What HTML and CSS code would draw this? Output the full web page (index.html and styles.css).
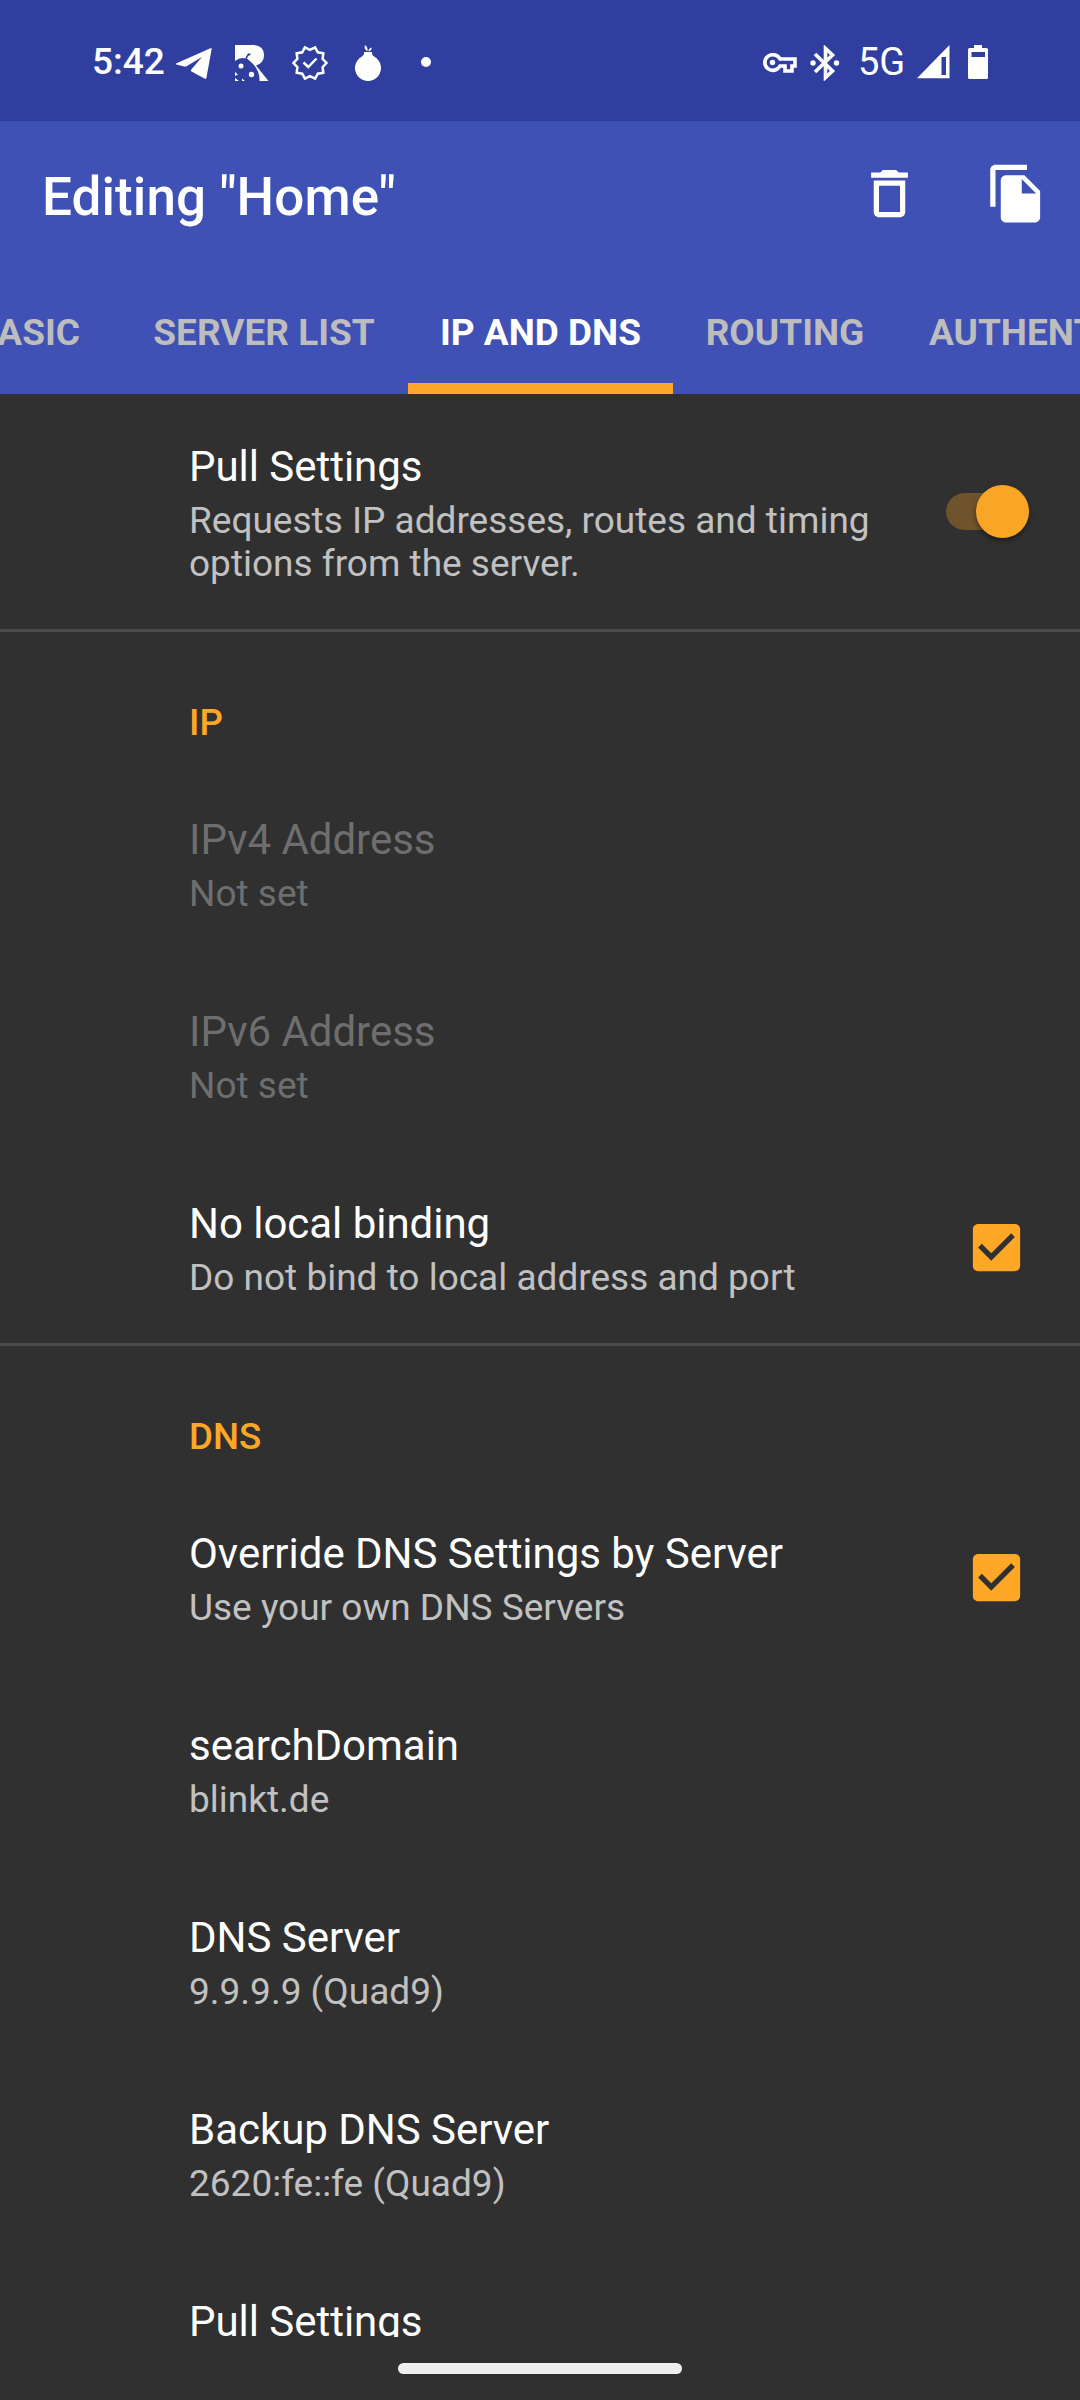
FILE: index.html
```
<!DOCTYPE html>
<html lang="en">
<head>
<meta charset="utf-8">
<title>Editing "Home"</title>
<link rel="stylesheet" href="styles.css">
</head>
<body>
<div class="screen">
  <header class="status">
    <div class="status-left">
      <span class="clock">5:42</span>
      <svg class="icon-telegram" viewBox="0 0 38 36"><path d="M1 18.500 35.500 3.200q1.300-.4 1.100 1L31.500 32.500q-.5 1.800-2 1L16.500 26.500q-1.200-.8-.2-2L27 12 11.500 21.200q-1 .6-2.300.2L1.300 19.600q-1.100-.4-.3-1.100z"/></svg>
      <svg class="icon-bug" viewBox="0 0 36 36"><path d="M0 0H19Q29 1 29 10Q29 18 21 20.500L33.500 36H24.500Q25 25 16 17L12 13.500 13 11 15.500 10V8.500H13L11 11.500 10.500 13.500Q5 12 0 16z"/><circle cx="6" cy="21" r="2.500"/><circle cx="16.500" cy="29.500" r="2.700"/><path d="M0 27 3 29.500 0 31zM0 33 4 36H0zM7 33.500 10 36H7z"/></svg>
      <svg class="icon-badge" viewBox="0 0 36 36"><path class="stroke" d="M34.500 18 30.600 22.100 31.300 27.700 25.800 28.700 23.100 33.700 18 31.200 12.900 33.700 10.200 28.700 4.700 27.700 5.400 22.100 1.500 18 5.400 13.900 4.700 8.300 10.200 7.300 12.900 2.300 18 4.800 23.100 2.300 25.800 7.300 31.300 8.300 30.600 13.900z"/><path class="stroke" d="M11.500 17.500 16.300 22 24.500 13.500"/></svg>
      <svg class="icon-onion" viewBox="0 0 28 36"><path d="M10 7H18Q17.500 10 20 11.500A13 13 0 1 1 8 11.500Q10.500 10 10 7z"/><path d="M13.500 6.300Q9.500 4 11 0 14 2 13.500 6.300zM14.500 6.300Q14.500 3.500 17.800 2.500 17.500 6 14.500 6.300z"/></svg>
      <span class="more-dot"></span>
    </div>
    <div class="status-right">
      <svg class="icon-key" viewBox="0 0 34 20"><path class="stroke thick" d="M17 6H32V13H29V18H22V13H17A8 7.800 0 1 1 17 6z"/><circle cx="9.500" cy="9.500" r="2.700"/></svg>
      <svg class="icon-bluetooth" viewBox="0 0 30 36"><path class="stroke thick" d="M5 9 22.500 26 15.500 32.500V3.500L22.500 10 5 27"/><circle cx="3" cy="18" r="2.700"/><circle cx="26.500" cy="18" r="2.700"/></svg>
      <span class="network">5G</span>
      <svg class="icon-signal" viewBox="0 0 33 34"><path fill-rule="evenodd" d="M0 33.300 32.500 0V33.300zM24.500 12V30H29V12z"/></svg>
      <svg class="icon-battery" viewBox="0 0 20 34"><path fill-rule="evenodd" d="M6 0H14V3H18.500Q20 3 20 4.500V32.500Q20 34 18.500 34H1.500Q0 34 0 32.500V4.500Q0 3 1.500 3H6zM3.500 7V12H17V7z"/></svg>
    </div>
  </header>

  <div class="appbar">
    <div class="toolbar">
      <h1 class="title">Editing "Home"</h1>
      <svg class="action" viewBox="0 0 24 24"><path d="M6 19c0 1.100.9 2 2 2h8c1.100 0 2-.9 2-2V7H6v12zM8 9h8v10H8V9zM15.500 4l-1-1h-5l-1 1H5v2h14V4z"/></svg>
      <svg class="action" viewBox="0 0 24 24"><path d="M16 1H4c-1.100 0-2 .9-2 2v14h2V3h12V1zm-1 4l6 6v10c0 1.100-.9 2-2 2H7.990C6.890 23 6 22.100 6 21l.01-14c0-1.100.89-2 1.990-2h7zm-1 7h5.500L14 6.500V12z"/></svg>
    </div>
    <nav class="tabs">
      <span class="tab tab-basic">BASIC</span>
      <span class="tab tab-servers">SERVER LIST</span>
      <span class="tab tab-ip active">IP AND DNS</span>
      <span class="tab tab-routing">ROUTING</span>
      <span class="tab tab-auth">AUTHENTICATION</span>
    </nav>
  </div>

  <main class="list">
    <div class="row">
      <div class="text"><div class="name">Pull Settings</div><div class="summary">Requests IP addresses, routes and timing options from the server.</div></div>
      <div class="switch"><span class="thumb"></span></div>
    </div>

    <h2 class="category">IP</h2>
    <div class="row disabled">
      <div class="text"><div class="name">IPv4 Address</div><div class="summary">Not set</div></div>
    </div>
    <div class="row disabled">
      <div class="text"><div class="name">IPv6 Address</div><div class="summary">Not set</div></div>
    </div>
    <div class="row">
      <div class="text"><div class="name">No local binding</div><div class="summary">Do not bind to local address and port</div></div>
      <svg class="check" viewBox="0 0 24 24"><path d="M19 3H5c-1.110 0-2 .9-2 2v14c0 1.100.89 2 2 2h14c1.110 0 2-.9 2-2V5c0-1.100-.89-2-2-2zm-9 14l-5-5 1.410-1.410L10 14.170l7.590-7.590L19 8l-9 9z"/></svg>
    </div>

    <h2 class="category">DNS</h2>
    <div class="row">
      <div class="text"><div class="name">Override DNS Settings by Server</div><div class="summary">Use your own DNS Servers</div></div>
      <svg class="check" viewBox="0 0 24 24"><path d="M19 3H5c-1.110 0-2 .9-2 2v14c0 1.100.89 2 2 2h14c1.110 0 2-.9 2-2V5c0-1.100-.89-2-2-2zm-9 14l-5-5 1.410-1.410L10 14.170l7.590-7.590L19 8l-9 9z"/></svg>
    </div>
    <div class="row">
      <div class="text"><div class="name">searchDomain</div><div class="summary">blinkt.de</div></div>
    </div>
    <div class="row">
      <div class="text"><div class="name">DNS Server</div><div class="summary">9.9.9.9 (Quad9)</div></div>
    </div>
    <div class="row">
      <div class="text"><div class="name">Backup DNS Server</div><div class="summary">2620:fe::fe (Quad9)</div></div>
    </div>
    <div class="row">
      <div class="text"><div class="name">Pull Settings</div></div>
    </div>
  </main>

  <footer class="navbar"><span class="handle"></span></footer>
</div>
</body>
</html>
```
FILE: styles.css
```
* { box-sizing: border-box; }

body {
  margin: 0;
  background: #303030;
  font-family: Roboto, sans-serif;
}

.screen {
  display: flex;
  flex-direction: column;
  width: 1080px;
  height: 2400px;
  overflow: hidden;
  background: #303030;
  color: #fff;
}

svg { display: block; flex: none; fill: #fff; }
.stroke { fill: none; stroke: #fff; stroke-width: 2.5; }
.thick { stroke-width: 3.6; }

/* Status bar */
.status {
  display: flex;
  flex: none;
  justify-content: space-between;
  height: 121px;
  padding: 0 92px 0 92px;
  background: #303f9f;
}

.status-left, .status-right {
  display: flex;
  align-items: center;
  height: 126px;
}

.clock, .network {
  font-size: 37px;
  line-height: 44px;
  font-weight: 500;
  padding-bottom: 3px;
}

.clock { width: 83px; }
.icon-telegram { width: 38px; height: 36px; }
.icon-bug { width: 36px; height: 36px; margin-left: 22px; }
.icon-badge { width: 36px; height: 36px; margin-left: 21px; }
.icon-onion { width: 28px; height: 36px; margin-left: 26px; }
.more-dot {
  width: 10px;
  height: 10px;
  margin: 0 0 2px 39px;
  border-radius: 50%;
  background: #fff;
}
.icon-key { width: 34px; height: 20px; }
.icon-bluetooth { width: 30px; height: 36px; margin-left: 13px; }
.network {
  width: 59px;
  margin-left: 18px;
  font-size: 38px;
  font-weight: 400;
}
.icon-signal { width: 33px; height: 34px; margin: 0 0 3px 0; }
.icon-battery { width: 20px; height: 34px; margin: 0 0 2px 18px; }

/* App bar */
.appbar {
  flex: none;
  height: 273px;
  background: #3f51b5;
}

.toolbar {
  display: flex;
  align-items: flex-start;
  height: 147px;
  padding: 41px 32px 0 42px;
  gap: 64px;
}

.title {
  flex: 1;
  margin: 4px 0 0;
  font-size: 53px;
  line-height: 62px;
  font-weight: 500;
  letter-spacing: .1px;
  white-space: nowrap;
}

.action { width: 63px; height: 63px; }

.tabs {
  display: flex;
  height: 126px;
  overflow: hidden;
}

.tab {
  display: flex;
  flex: none;
  justify-content: center;
  align-items: center;
  padding-top: 3px;
  border-bottom: 0 solid #ffa726;
  font-size: 37px;
  font-weight: 700;
  color: #bdbdbd;
  white-space: nowrap;
}

.tab-basic { width: 120px; justify-content: flex-end; padding-right: 40px; }
.tab-servers { width: 288px; }
.tab-ip { width: 265px; }
.tab-routing { width: 224px; }
.tab-auth { padding: 3px 32px 0; }
.active { color: #fff; border-bottom-width: 11px; padding-top: 14px; }

/* Preference list */
.list {
  flex: none;
  height: 1943px;
  overflow: hidden;
}

.row {
  display: flex;
  align-items: center;
  min-height: 192px;
  padding: 0 51px 0 189px;
}

.text {
  flex: 1;
  align-self: flex-start;
  padding: 48px 0 44px;
}

.name {
  margin-bottom: 8px;
  font-size: 42px;
  line-height: 49px;
  letter-spacing: -.03px;
}

.summary {
  max-width: 700px;
  font-size: 37px;
  line-height: 43px;
  color: #c1c1c1;
}

.disabled .name, .disabled .summary { color: #6e6e6e; }

.category {
  height: 138px;
  margin: 0;
  padding: 69px 0 0 189px;
  border-top: 3px solid #4a4a4a;
  font-size: 36.75px;
  line-height: 43px;
  font-weight: 500;
  color: #ffa726;
}

.check {
  width: 63px;
  height: 63px;
  margin-right: 1px;
  fill: #ffa726;
}

.switch {
  display: flex;
  align-items: center;
  justify-content: flex-end;
  width: 83px;
  height: 37px;
  border-radius: 19px;
  background: #6e532d;
}

.thumb {
  flex: none;
  width: 53px;
  height: 53px;
  border-radius: 50%;
  background: #f9a526;
  box-shadow: 0 3px 5px rgba(0, 0, 0, .4);
}

/* Gesture navigation */
.navbar {
  display: flex;
  flex: 1;
  justify-content: center;
  align-items: flex-start;
  padding-top: 26px;
}

.handle {
  width: 284px;
  height: 11px;
  border-radius: 6px;
  background: #eee;
}
```
